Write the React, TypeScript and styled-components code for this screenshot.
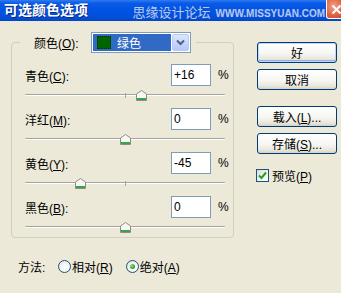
import React from 'react';
import styled, {createGlobalStyle} from 'styled-components';

const FACE = '#ece9d8';
const FIELD_BORDER = '#7f9db9';
const BUTTON_BORDER = '#003c74';
const FONT = '"Liberation Sans", "Noto Sans CJK SC", sans-serif';

const GlobalStyle = createGlobalStyle`
  html, body {
    margin: 0;
    padding: 0;
    background: ${FACE};
  }
  body {
    font-family: ${FONT};
    font-size: 12px;
    color: #000;
  }
`;

const DialogSt = styled.div`
  width: 341px;
  height: 293px;
  overflow: hidden;
  background: ${FACE};
  display: flex;
  flex-direction: column;
`;

const TitleBarSt = styled.div`
  flex: none;
  height: 21px;
  display: flex;
  align-items: stretch;
  padding-left: 4px;
  background: linear-gradient(
    180deg,
    #2f7cf0 0%,
    #0a5ae8 15%,
    #0054e2 50%,
    #0050da 85%,
    #0743c0 100%
  );
`;

const TitleSt = styled.span`
  color: #fff;
  font-size: 14px;
  font-weight: 700;
  line-height: 21px;
  text-shadow: 1px 1px 0 #0b2a86;
`;

const WatermarkSt = styled.span`
  margin-left: auto;
  align-self: flex-end;
  display: flex;
  align-items: baseline;
  gap: 5px;
  color: #b3c9f6;
  text-shadow: 0 0 1px #2b56c4;
  line-height: 15px;
`;

const WatermarkCnSt = styled.span`
  font-size: 13px;
`;

const WatermarkEnSt = styled.span`
  font-size: 10px;
  font-weight: 700;
`;

const CloseButtonSt = styled.div`
  flex: none;
  width: 21px;
  height: 19px;
  margin-left: 1px;
  margin-right: -6px;
  box-sizing: border-box;
  border: 1px solid #fff;
  border-top: none;
  border-radius: 0 0 3px 3px;
  background: radial-gradient(circle at 35% 35%, #f2a28a 0%, #e0603a 55%, #c43d1b 100%);
  display: flex;
  align-items: center;
  justify-content: center;
`;

const BodySt = styled.div`
  flex: 1;
  display: flex;
`;

const LeftColSt = styled.div`
  width: 234px;
  box-sizing: border-box;
  padding-left: 11px;
  display: flex;
  flex-direction: column;
`;

const GroupBoxSt = styled.fieldset`
  margin: 11px 0 0;
  width: 223px;
  min-width: 0;
  box-sizing: border-box;
  padding: 11px 5px 2px 13px;
  border: 1px solid #d0d0bf;
  border-radius: 4px;
  display: flex;
  flex-direction: column;
  gap: 5px;
`;

const LegendSt = styled.legend`
  margin-left: -5px;
  padding: 0 5px 0 14px;
  display: flex;
  align-items: center;
`;

const LegendLabelSt = styled.span`
  width: 57px;
`;

const ComboBoxSt = styled.div`
  width: 100px;
  height: 21px;
  box-sizing: border-box;
  border: 1px solid ${FIELD_BORDER};
  background: #fff;
  padding: 1px;
  display: flex;
  gap: 1px;
`;

const ComboValueSt = styled.div`
  flex: 1;
  display: flex;
  align-items: center;
  gap: 6px;
  padding-left: 4px;
  background: #316ac5;
  color: #fff;
`;

const SwatchSt = styled.span<{$color: string}>`
  width: 14px;
  height: 13px;
  box-sizing: border-box;
  border: 1px dotted #0a2a10;
  background: ${({$color}) => $color};
`;

const ComboArrowSt = styled.div`
  width: 17px;
  box-sizing: border-box;
  border: 1px solid #b9cbf3;
  border-radius: 2px;
  background: linear-gradient(180deg, #dce6fd 0%, #c3d4fc 60%, #b4c8f8 100%);
  display: flex;
  align-items: center;
  justify-content: center;
`;

const AdjustRowSt = styled.div`
  display: flex;
  flex-direction: column;
`;

const RowHeaderSt = styled.div`
  display: grid;
  grid-template-columns: 146px 40px auto;
  align-items: center;
  height: 22px;
`;

const ValueInputSt = styled.input`
  width: 40px;
  height: 22px;
  box-sizing: border-box;
  margin: 0;
  padding: 0 2px;
  border: 1px solid ${FIELD_BORDER};
  background: #fff;
  font: 12px ${FONT};
  color: #000;
  outline: none;
`;

const PercentSt = styled.span`
  margin-left: 7px;
  font-size: 12px;
`;

const SliderSt = styled.div`
  position: relative;
  width: 200px;
  height: 16px;
  margin-top: 1px;
  padding-top: 7px;
  box-sizing: border-box;
`;

const TrackSt = styled.div`
  height: 0;
  border-top: 1px solid #a5a39a;
  border-bottom: 1px solid #fff;
  border-radius: 1px;
`;

const TickSt = styled.div`
  position: absolute;
  left: 100px;
  top: 6px;
  width: 1px;
  height: 5px;
  background: #a5a39a;
`;

const ThumbSt = styled.svg`
  position: absolute;
  top: 3px;
`;

const MethodRowSt = styled.div`
  margin-top: 20px;
  padding-left: 7px;
  height: 16px;
  display: flex;
  align-items: center;
`;

const MethodLabelSt = styled.span`
  width: 40px;
`;

const RadioOptionSt = styled.label`
  display: flex;
  align-items: center;
  gap: 1px;
  margin-right: 13px;
`;

const RadioSt = styled.span<{$checked: boolean}>`
  width: 13px;
  height: 13px;
  box-sizing: border-box;
  border-radius: 50%;
  border: 1px solid #1c5180;
  background: radial-gradient(circle at 60% 60%, #ffffff 0%, #f3f3ef 50%, #d8d8d0 100%);
  display: flex;
  align-items: center;
  justify-content: center;
  &:after {
    content: '';
    width: 5px;
    height: 5px;
    border-radius: 50%;
    background: ${({$checked}) =>
      $checked ? 'radial-gradient(circle at 35% 35%, #8fe08f 0%, #21a121 70%)' : 'transparent'};
  }
`;

const RightColSt = styled.div`
  padding: 21px 0 0 23px;
  display: flex;
  flex-direction: column;
`;

const PushButtonSt = styled.button<{$default?: boolean; $gap: number}>`
  width: 80px;
  height: 21px;
  margin: ${({$gap}) => $gap}px 0 0;
  padding: 0;
  box-sizing: border-box;
  border: 1px solid ${BUTTON_BORDER};
  border-radius: 3px;
  background: linear-gradient(180deg, #ffffff 0%, #f6f6f2 55%, #e8e6dc 85%, #d6d0c5 100%);
  box-shadow: ${({$default}) =>
    $default ? 'inset 0 0 0 1px #c3d5fb, inset 0 -1px 0 1px #8eb0ee' : 'none'};
  font: 12px ${FONT};
  color: #000;
`;

const CheckRowSt = styled.label`
  margin-top: 13px;
  margin-left: -1px;
  display: flex;
  align-items: center;
  gap: 3px;
`;

const CheckBoxSt = styled.span`
  width: 13px;
  height: 13px;
  box-sizing: border-box;
  border: 1px solid #1c5180;
  background: linear-gradient(135deg, #dcdcd4 0%, #f4f4f0 60%, #ffffff 100%);
  display: flex;
  align-items: center;
  justify-content: center;
`;

interface Adjustment {
  name: string;
  hotkey: string;
  value: number;
  text: string;
}

const ADJUSTMENTS: Adjustment[] = [
  {name: '青色', hotkey: 'C', value: 16, text: '+16'},
  {name: '洋红', hotkey: 'M', value: 0, text: '0'},
  {name: '黄色', hotkey: 'Y', value: -45, text: '-45'},
  {name: '黑色', hotkey: 'B', value: 0, text: '0'},
];

const Thumb = ({value}: {value: number}) => (
  <ThumbSt width="11" height="11" viewBox="0 0 11 11" style={{left: 100 + value - 5}}>
    <path d="M0.5 4 L5.5 0.5 L10.5 4 V10.5 H0.5 Z" fill="#f7f7f3" stroke="#8d8d88" />
    <rect x="1" y="8" width="9" height="2" fill="#3aa346" />
  </ThumbSt>
);

const AdjustRow = ({name, hotkey, value, text}: Adjustment) => (
  <AdjustRowSt>
    <RowHeaderSt>
      <span>
        {name}(<u>{hotkey}</u>):
      </span>
      <ValueInputSt readOnly value={text} />
      <PercentSt>%</PercentSt>
    </RowHeaderSt>
    <SliderSt>
      <TrackSt />
      <TickSt />
      <Thumb value={value} />
    </SliderSt>
  </AdjustRowSt>
);

const App = () => (
  <>
    <GlobalStyle />
    <DialogSt>
      <TitleBarSt>
        <TitleSt>可选颜色选项</TitleSt>
        <WatermarkSt>
          <WatermarkCnSt>思缘设计论坛</WatermarkCnSt>
          <WatermarkEnSt>WWW.MISSYUAN.COM</WatermarkEnSt>
        </WatermarkSt>
        <CloseButtonSt>
          <svg width="11" height="11" viewBox="0 0 11 11">
            <path d="M1.5 1.5 L9.5 9.5 M9.5 1.5 L1.5 9.5" stroke="#fff" strokeWidth="2" />
          </svg>
        </CloseButtonSt>
      </TitleBarSt>
      <BodySt>
        <LeftColSt>
          <GroupBoxSt>
            <LegendSt>
              <LegendLabelSt>
                颜色(<u>O</u>):
              </LegendLabelSt>
              <ComboBoxSt>
                <ComboValueSt>
                  <SwatchSt $color="#006400" />
                  <span>绿色</span>
                </ComboValueSt>
                <ComboArrowSt>
                  <svg width="9" height="7" viewBox="0 0 9 7">
                    <path d="M1 1.5 L4.5 5 L8 1.5" fill="none" stroke="#4d6185" strokeWidth="2" />
                  </svg>
                </ComboArrowSt>
              </ComboBoxSt>
            </LegendSt>
            {ADJUSTMENTS.map(a => (
              <AdjustRow key={a.hotkey} {...a} />
            ))}
          </GroupBoxSt>
          <MethodRowSt>
            <MethodLabelSt>方法:</MethodLabelSt>
            <RadioOptionSt>
              <RadioSt $checked={false} />
              <span>
                相对(<u>R</u>)
              </span>
            </RadioOptionSt>
            <RadioOptionSt>
              <RadioSt $checked />
              <span>
                绝对(<u>A</u>)
              </span>
            </RadioOptionSt>
          </MethodRowSt>
        </LeftColSt>
        <RightColSt>
          <PushButtonSt $default $gap={0}>好</PushButtonSt>
          <PushButtonSt $gap={6}>取消</PushButtonSt>
          <PushButtonSt $gap={16}>
            载入(<u>L</u>)...
          </PushButtonSt>
          <PushButtonSt $gap={6}>
            存储(<u>S</u>)...
          </PushButtonSt>
          <CheckRowSt>
            <CheckBoxSt>
              <svg width="9" height="9" viewBox="0 0 9 9">
                <path d="M1 4.5 L3.5 7 L8 1.5" fill="none" stroke="#21a121" strokeWidth="2" />
              </svg>
            </CheckBoxSt>
            <span>
              预览(<u>P</u>)
            </span>
          </CheckRowSt>
        </RightColSt>
      </BodySt>
    </DialogSt>
  </>
);

export default App;
